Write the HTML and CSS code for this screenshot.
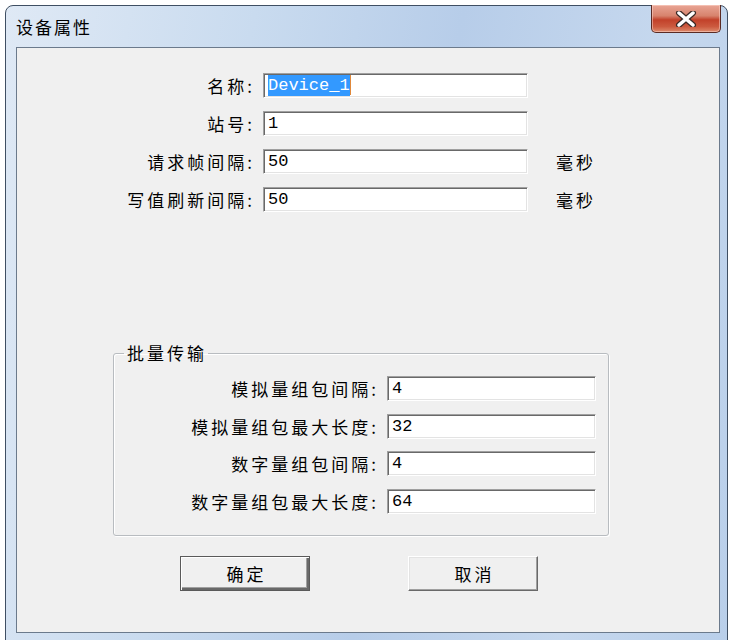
FILE: index.html
```html
<!DOCTYPE html>
<html lang="zh-CN">
<head>
    <meta charset="UTF-8">
    <title>设备属性</title>
    <link rel="stylesheet" href="styles.css">
</head>
<body>
    <div class="window">
        <div class="titlebar">
            <span class="title">设备属性</span>
            <button class="close-btn" type="button" aria-label="关闭">
                <svg width="24" height="16" viewBox="0 0 24 16">
                    <path d="M5 2 L19 14 M19 2 L5 14" stroke="#3b2a26" stroke-width="6" stroke-linecap="round"/>
                    <path d="M5 2 L19 14 M19 2 L5 14" stroke="#ffffff" stroke-width="3.5" stroke-linecap="round"/>
                </svg>
            </button>
        </div>

        <div class="client">
            <div class="form-main">
                <div class="row">
                    <span class="label">名称:</span>
                    <div class="field wide"><span class="selected">Device_1</span><span class="caret"></span></div>
                </div>
                <div class="row">
                    <span class="label">站号:</span>
                    <div class="field wide">1</div>
                </div>
                <div class="row">
                    <span class="label">请求帧间隔:</span>
                    <div class="field wide">50</div>
                    <span class="unit">毫秒</span>
                </div>
                <div class="row">
                    <span class="label">写值刷新间隔:</span>
                    <div class="field wide">50</div>
                    <span class="unit">毫秒</span>
                </div>
            </div>

            <fieldset class="group">
                <legend>批量传输</legend>
                <div class="row group-row">
                    <span class="label">模拟量组包间隔:</span>
                    <div class="field narrow">4</div>
                </div>
                <div class="row group-row">
                    <span class="label">模拟量组包最大长度:</span>
                    <div class="field narrow">32</div>
                </div>
                <div class="row group-row">
                    <span class="label">数字量组包间隔:</span>
                    <div class="field narrow">4</div>
                </div>
                <div class="row group-row">
                    <span class="label">数字量组包最大长度:</span>
                    <div class="field narrow">64</div>
                </div>
            </fieldset>

            <div class="buttons">
                <button type="button" class="btn btn-default">确定</button>
                <button type="button" class="btn">取消</button>
            </div>
        </div>
    </div>
</body>
</html>
```

FILE: styles.css
```css
* {
    margin: 0;
    padding: 0;
    box-sizing: border-box;
}

body {
    font-family: "Noto Sans CJK SC", "Liberation Sans", sans-serif;
    background: #ffffff;
    width: 730px;
    height: 640px;
    overflow: hidden;
}

.window {
    margin: 5px 2px 0 5px;
    height: 640px;
    border: 1px solid #3f4f63;
    border-radius: 8px 8px 0 0;
    background: linear-gradient(100deg, #dfe9f5 0%, #c9dbef 30%, #b7cde9 55%, #c6d8ee 80%, #b9cfea 100%);
}

.titlebar {
    height: 41px;
    display: flex;
    align-items: flex-start;
    justify-content: space-between;
    padding: 0 6px 0 10px;
}

.title {
    font-size: 17px;
    letter-spacing: 2px;
    line-height: 41px;
    color: #000;
}

.close-btn {
    width: 70px;
    height: 28px;
    margin-top: -1px;
    border: 1px solid #5a2b24;
    border-top: none;
    border-radius: 0 0 5px 5px;
    background: linear-gradient(#e9a595 0%, #d7836d 40%, #c2412a 55%, #cc5a3f 80%, #dd8b6d 100%);
    box-shadow: inset 0 0 0 1px rgba(255, 220, 210, 0.5);
    display: flex;
    align-items: center;
    justify-content: center;
}

.client {
    height: 586px;
    margin: 0 7px 0 10px;
    border: 1px solid #6b7a8c;
    background: #f0f0f0;
    font-size: 17px;
    letter-spacing: 3px;
    color: #000;
}

.form-main {
    padding-top: 18px;
}

.row {
    display: flex;
    align-items: center;
    height: 38px;
}

.label {
    width: 246px;
    padding-right: 8px;
    text-align: right;
    white-space: nowrap;
}

.field {
    height: 25px;
    background: #fff;
    border-top: 1px solid #a0a0a0;
    border-left: 1px solid #a0a0a0;
    border-right: 1px solid #ffffff;
    border-bottom: 1px solid #ffffff;
    box-shadow: inset 1px 1px 0 #696969, inset -1px -1px 0 #e3e3e3;
    font-family: "Liberation Mono", monospace;
    font-size: 17px;
    letter-spacing: 0;
    line-height: 23px;
    padding-left: 4px;
    display: flex;
    align-items: center;
}

.wide {
    width: 265px;
}

.narrow {
    width: 209px;
}

.selected {
    background: #3399ff;
    color: #fff;
    line-height: 21px;
}

.caret {
    width: 1px;
    height: 20px;
    background: #e0883a;
}

.unit {
    margin-left: 28px;
}

.group {
    margin: 124px 0 0 96px;
    width: 496px;
    height: 194px;
    border: 1px solid #b8bcc0;
    border-radius: 3px;
    box-shadow: 1px 1px 0 #ffffff, inset 1px 1px 0 #ffffff;
    padding-top: 6px;
}

.group legend {
    margin-left: 10px;
    padding: 0 1px 0 3px;
    line-height: 22px;
}

.group-row {
    height: 37.5px;
}

.group-row .label {
    width: 273px;
}

.buttons {
    display: flex;
    gap: 98px;
    margin: 20px 0 0 163px;
}

.btn {
    width: 130px;
    height: 35px;
    font-family: inherit;
    font-size: 17px;
    letter-spacing: 3px;
    padding-left: 3px;
    background: #f0f0f0;
    border-top: 1px solid #ffffff;
    border-left: 1px solid #ffffff;
    border-right: 1px solid #696969;
    border-bottom: 1px solid #696969;
    box-shadow: inset -1px -1px 0 #a0a0a0, inset 1px 1px 0 #e3e3e3;
}

.btn-default {
    border: 1px solid #5a5a5a;
    box-shadow: inset 1px 1px 0 #ffffff, inset -2px -2px 0 #696969, inset -3px -3px 0 #a0a0a0;
}
```
